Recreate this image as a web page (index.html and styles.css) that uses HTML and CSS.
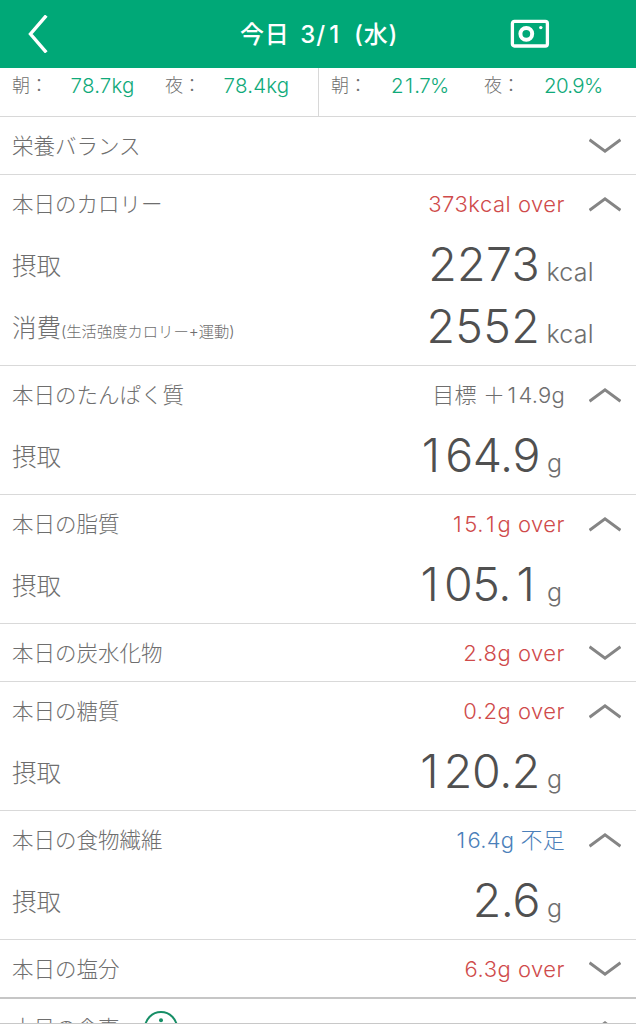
FILE: index.html
```html
<!DOCTYPE html>
<html lang="ja">
<head>
<meta charset="utf-8">
<title>今日 3/1 (水)</title>
<link rel="stylesheet" href="styles.css">
</head>
<body>
<svg class="defs" width="0" height="0">
  <symbol id="up" viewBox="0 0 32 16"><path d="M.5 14.2 16 2.9 31.5 14.2"/></symbol>
  <symbol id="down" viewBox="0 0 32 16"><path d="M.5 1.8 16 13.1 31.5 1.8"/></symbol>
</svg>
<div class="app">
  <header class="bar">
    <svg class="back" width="20" height="38" viewBox="0 0 20 38"><path d="M18.3 .6 2.5 19 18.3 37.4"/></svg>
    <h1 class="title">今日 3/<i>1</i> (水)</h1>
    <svg class="camera" width="40" height="30" viewBox="0 0 40 30"><rect x="2.4" y="2.4" width="35" height="24.6" rx="2"/><circle cx="16.3" cy="14.8" r="5.9"/><circle class="dot" cx="30.8" cy="8.6" r="1.7"/></svg>
  </header>
  <div class="strip">
    <div class="half"><span class="when">朝：</span><span class="val">78.7kg</span><span class="when">夜：</span><span class="val">78.4kg</span></div>
    <div class="half pct"><span class="when">朝：</span><span class="val">2<i>1</i>.7%</span><span class="when">夜：</span><span class="val">20.9%</span></div>
  </div>
  <section class="card short"><div class="head"><h2>栄養バランス</h2><svg class="chev"><use href="#down"/></svg></div></section>
  <section class="card double">
    <div class="head"><h2>本日のカロリー</h2><span class="status over">373kcal over</span><svg class="chev"><use href="#up"/></svg></div>
    <div class="metric"><span class="name">摂取</span><span class="num">2273</span><span class="unit">kcal</span></div>
    <div class="metric"><span class="name">消費<small>(生活強度カロリー+運動)</small></span><span class="num">2552</span><span class="unit">kcal</span></div>
  </section>
  <section class="card">
    <div class="head"><h2>本日のたんぱく質</h2><span class="status goal">目標 ＋<i>1</i>4.9g</span><svg class="chev"><use href="#up"/></svg></div>
    <div class="metric"><span class="name">摂取</span><span class="num"><i>1</i>64.9</span><span class="unit">g</span></div>
  </section>
  <section class="card">
    <div class="head"><h2>本日の脂質</h2><span class="status over"><i>1</i>5.<i>1</i>g over</span><svg class="chev"><use href="#up"/></svg></div>
    <div class="metric"><span class="name">摂取</span><span class="num"><i>1</i>05.<i>1</i></span><span class="unit">g</span></div>
  </section>
  <section class="card short"><div class="head"><h2>本日の炭水化物</h2><span class="status over">2.8g over</span><svg class="chev"><use href="#down"/></svg></div></section>
  <section class="card">
    <div class="head"><h2>本日の糖質</h2><span class="status over">0.2g over</span><svg class="chev"><use href="#up"/></svg></div>
    <div class="metric"><span class="name">摂取</span><span class="num"><i>1</i>20.2</span><span class="unit">g</span></div>
  </section>
  <section class="card">
    <div class="head"><h2>本日の食物繊維</h2><span class="status lack"><i>1</i>6.4g 不足</span><svg class="chev"><use href="#up"/></svg></div>
    <div class="metric"><span class="name">摂取</span><span class="num">2.6</span><span class="unit">g</span></div>
  </section>
  <section class="card short last"><div class="head"><h2>本日の塩分</h2><span class="status over">6.3g over</span><svg class="chev"><use href="#down"/></svg></div></section>
  <section class="card short meal"><div class="head"><h2>本日の食事</h2><svg class="info" width="34" height="34" viewBox="0 0 34 34"><circle cx="17" cy="17" r="16"/><circle class="dot" cx="17" cy="9.2" r="2"/><path d="M14 14h3.5v11M13.5 25h7.5"/></svg><svg class="chev"><use href="#up"/></svg></div></section>
</div>
</body>
</html>
```
FILE: styles.css
```css
* { box-sizing: border-box; }
body {
  margin: 0;
  background: #fff;
  color: #6e6e6e;
  font-family: Inter, "Noto Sans CJK JP", sans-serif;
  font-weight: 300;
}
svg { fill: none; flex: none; }
/* the digit one, padded to the width of the other digits */
i { margin: 0 .1em; font-style: normal; }
.defs { display: block; }
.app {
  width: 636px;
  height: 1024px;
  overflow: hidden;
  border-bottom: 1px solid #c8c8c8;
}
.bar {
  display: grid;
  grid-template-columns: 240px 156px 1fr;
  align-items: center;
  height: 68px;
  background: #00a877;
  color: #fff;
}
.back { margin-left: 28px; stroke: #fff; stroke-width: 3.4; }
.title { margin: 0; padding-bottom: 3px; font-size: 24px; font-weight: 500; white-space: nowrap; letter-spacing: .8px; word-spacing: 3.5px; }
.title i { margin: 0 .14em; }
.camera { margin-left: 114px; stroke: #fff; stroke-width: 3.3; }
.camera circle { stroke-width: 4; }
.camera .dot { fill: #fff; stroke: none; }
.strip { display: flex; height: 49px; border-bottom: 1px solid #d8d8d8; }
.half {
  display: grid;
  grid-template-columns: 52px 101px 52px 1fr;
  width: 318px;
  padding: 3px 0 0 12px;
  line-height: 30px;
}
.half + .half { border-left: 1px solid #d8d8d8; }
.when { font-size: 18px; }
.val { margin-left: 6.5px; color: #10aa7a; font-size: 20.5px; letter-spacing: .2px; }
.pct .val { margin-left: 8px; letter-spacing: -.7px; }
.card { height: 129px; border-bottom: 1px solid #d9d9d9; }
.short { height: 58px; }
.double { height: 191px; }
.last { height: 59px; border-bottom: 2px solid #c6c6c6; }
.head { display: flex; align-items: center; height: 58px; padding: 0 15px 0 12px; }
h2 { margin: 0 auto 0 0; padding-bottom: 4px; font-size: 21.5px; font-weight: 300; white-space: nowrap; }
.status { font-size: 22px; white-space: nowrap; letter-spacing: .5px; }
.over { color: #cf4b4b; }
.lack { color: #4b80ba; }
.goal, .lack { padding-bottom: 4px; letter-spacing: .2px; }
.chev { width: 32px; height: 16px; margin-left: 24px; stroke: #858585; stroke-width: 3; }
.metric {
  display: grid;
  grid-template-columns: 1fr auto 96px;
  align-items: baseline;
  height: 62px;
  padding-left: 12px;
  line-height: 62px;
}
.name { align-self: start; line-height: 66px; font-size: 24.5px; }
.name small { font-size: 15.3px; }
.num { color: #505050; font-size: 46.5px; letter-spacing: -.4px; }
.double .num { letter-spacing: .3px; }
.unit { padding-left: 7px; font-size: 25px; letter-spacing: .2px; }
.double .unit { padding-left: 6.5px; }
.num i { margin: 0 .12em; }
.meal .head { justify-content: flex-start; }
.meal h2 { margin-right: 24px; }
.meal .chev { margin-left: auto; }
.info { stroke: #168e66; stroke-width: 2; }
.info .dot { fill: #168e66; stroke: none; }
```
